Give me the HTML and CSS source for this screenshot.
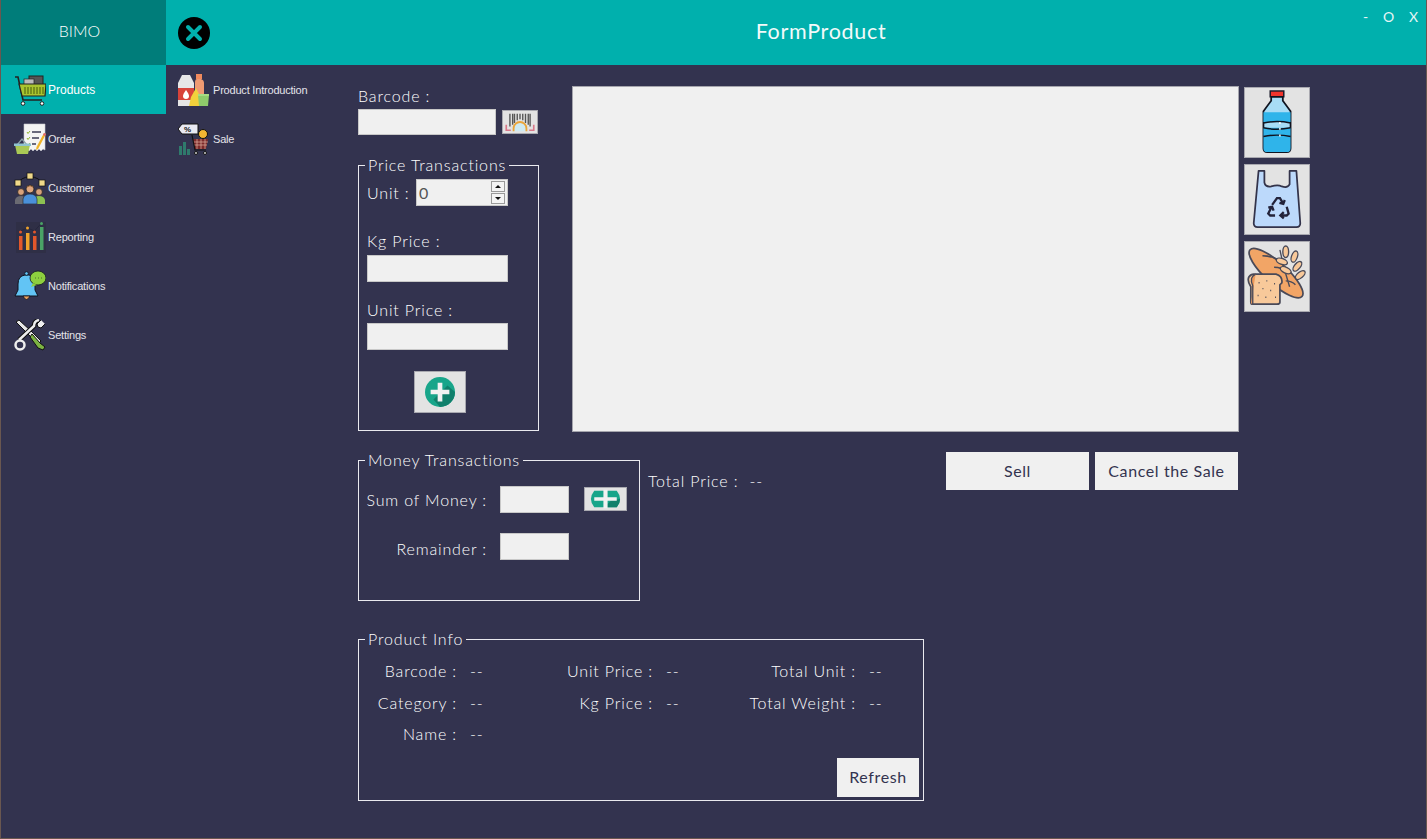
FILE: index.html
```html
<!DOCTYPE html>
<html lang="en">
<head>
  <meta charset="UTF-8" />
  <title>FormProduct</title>
  <link rel="stylesheet" href="styles.css">
</head>
<body>
<div class="app">

  <!-- top bar -->
  <header class="topbar">
    <div class="brand">BIMO</div>
    <div class="titlebar">
      <svg class="close-icon" viewBox="0 0 32 32"><circle cx="16" cy="16" r="16" fill="#000"/><path d="M10 10 22 22M22 10 10 22" stroke="#00b0ad" stroke-width="4" stroke-linecap="round"/></svg>
      <div class="title">FormProduct</div>
      <div class="winbtns"><span>-</span><span>O</span><span>X</span></div>
    </div>
  </header>

  <div class="content">
    <!-- left menu -->
    <nav class="sidebar">
      <a class="navitem active">
        <svg viewBox="0 0 32 32"><path d="M1 3 4 3 9 26H28" fill="none" stroke="#222" stroke-width="1.600"/><rect x="15" y="2" width="14" height="9" fill="#555" stroke="#222"/><rect x="10" y="5" width="10" height="6" fill="#bbb" stroke="#222" stroke-width=".7"/><path d="M5 10H32L31 22H8Z" fill="#a9c42f" stroke="#222" stroke-width="1.200"/><path d="M11 13V20M14 13V20M17 13V20M20 13V20M23 13V20M26 13V20M29 13V20" stroke="#5d7315" stroke-width="1.300"/><circle cx="9" cy="29.500" r="1.800" fill="#fff" stroke="#222"/><circle cx="28" cy="29.500" r="1.800" fill="#fff" stroke="#222"/></svg>
        <span>Products</span>
      </a>
      <a class="navitem">
        <svg viewBox="0 0 32 32"><path d="M10 1H31V27L29 26 27 28 25 26 23 28 21 26 19 28 17 26 15 28 13 26 10 27Z" fill="#f4f4f4" stroke="#c9c9d2" stroke-width=".6"/><path d="M13 9 14 10.500 16 8M13 15 14 16.500 16 14M13 21 14 22.500 16 20" fill="none" stroke="#8eb52d" stroke-width="1"/><path d="M18 9H27M18 15H25M18 21H22" stroke="#3b3b55" stroke-width="1.400"/><path d="M32 11 24 26 22 27 22.500 24 30 10Z" fill="#f0b429"/><path d="M30 10 32 11 31 13 29 12Z" fill="#e0607a"/><path d="M1 22H16L14 31H3Z" fill="#a9c955"/><path d="M3 22 8 16 13 22" fill="none" stroke="#8aa0a8" stroke-width="1.200"/><rect x="0" y="20.500" width="17" height="2.500" fill="#8fc3d0"/></svg>
        <span>Order</span>
      </a>
      <a class="navitem">
        <svg viewBox="0 0 32 32"><path d="M3 13A14 13 0 0 1 29 13" fill="none" stroke="#111" stroke-width="1"/><rect x="1" y="8" width="6" height="6" fill="#f0d98a" stroke="#111" stroke-width=".7"/><rect x="13" y="1" width="6" height="6" fill="#f0d98a" stroke="#111" stroke-width=".7"/><rect x="25" y="8" width="6" height="6" fill="#f0d98a" stroke="#111" stroke-width=".7"/><circle cx="7" cy="20" r="3.400" fill="#d9a27a" stroke="#222" stroke-width=".8"/><path d="M1 32V28Q2 24 7 24 12 24 12 28V32Z" fill="#6a6a72"/><circle cx="25" cy="20" r="3.400" fill="#d9a27a" stroke="#222" stroke-width=".8"/><path d="M20 32V28Q20 24 25 24 30 24 31 28V32Z" fill="#8cc152"/><circle cx="16" cy="17" r="4" fill="#e0a77e" stroke="#222" stroke-width=".8"/><path d="M12 16Q16 11 20 16L16 14Z" fill="#7a4a22"/><path d="M9 32V27Q10 22 16 22 22 22 23 27V32Z" fill="#4a90d9" stroke="#222" stroke-width=".6"/></svg>
        <span>Customer</span>
      </a>
      <a class="navitem">
        <svg viewBox="0 0 32 32"><rect x="2" y="1" width="30" height="31" fill="#2f2f46"/><rect x="5" y="15" width="3.500" height="14" fill="#e2572b"/><rect x="12" y="12" width="3.500" height="17" fill="#f0a32b"/><rect x="19" y="15" width="3.500" height="14" fill="#e2572b"/><rect x="26" y="6" width="3.500" height="23" fill="#4aa366"/><path d="M6.500 10 13.500 7 20.500 10 27.500 2" fill="none" stroke="#23233a" stroke-width=".8"/><circle cx="6.500" cy="11" r="1.500" fill="#e2572b"/><circle cx="13.500" cy="7" r="1.500" fill="#f0a32b"/><circle cx="20.500" cy="11" r="1.500" fill="#e2572b"/><circle cx="27.500" cy="2.500" r="1.500" fill="#4aa366"/></svg>
        <span>Reporting</span>
      </a>
      <a class="navitem">
        <svg viewBox="0 0 32 32"><path d="M11 5Q4 6 4 14V20L1 26H24L21 20V14Q21 6 15 5Z" fill="#62c4f5" stroke="#10131f" stroke-width="1"/><circle cx="12.500" cy="3.500" r="1.800" fill="#62c4f5" stroke="#10131f" stroke-width=".8"/><path d="M9 26Q12.500 33 16 26Z" fill="#e8a05c" stroke="#10131f" stroke-width=".8"/><ellipse cx="24" cy="8" rx="8" ry="7" fill="#8dcf3f" stroke="#10131f" stroke-width=".8"/><path d="M19 13 17 17 23 15Z" fill="#8dcf3f"/><path d="M21 8H21.500M24 8H24.500M27 8H27.500" stroke="#10131f" stroke-width="1.200"/></svg>
        <span>Notifications</span>
      </a>
      <a class="navitem">
        <svg viewBox="0 0 32 32"><path d="M2 3 5 1 17 12 27 22 24 25 14 15Z" fill="#e8e8e8" stroke="#111" stroke-width="1"/><path d="M18 15 26 24 31 28 29 31 24 29 16 18Z" fill="#7cb342" stroke="#111" stroke-width="1"/><path d="M25 1Q20 2 20 7L5 21" fill="none" stroke="#111" stroke-width="4.500"/><path d="M25 1Q20 2 20 7L5 21" fill="none" stroke="#eee" stroke-width="2.500"/><path d="M31 5 27 9 24 8 23 5 27 1" fill="#eee" stroke="#111" stroke-width="1"/><circle cx="6" cy="26" r="4.500" fill="#33334f" stroke="#eee" stroke-width="2.500"/></svg>
        <span>Settings</span>
      </a>
    </nav>

    <!-- sub menu -->
    <nav class="submenu">
      <a class="navitem sub">
        <svg viewBox="0 0 32 32"><path d="M0 9 4 1H12L16 9V32H0Z" fill="#e6e6e6"/><rect x="0" y="14" width="16" height="12" fill="#d8433a"/><path d="M8 16Q11 20 11 22A3 3 0 0 1 5 22Q5 20 8 16Z" fill="#fff"/><rect x="18" y="0" width="6" height="5" fill="#f08a5d"/><path d="M17 9Q17 5 19 5H23Q26 6 26 9V22H17Z" fill="#ef9a72"/><path d="M11 32 13 23 18 14 22 22 22 32Z" fill="#f2d13c"/><path d="M20 21H31L30 32H21Z" fill="#8fcb6b"/><rect x="20" y="20" width="11" height="2" fill="#a6dc84"/></svg>
        <span>Product Introduction</span>
      </a>
      <a class="navitem sub">
        <svg viewBox="0 0 32 32"><path d="M0 6 4 1H20V11H4Z" fill="#e9e9f2" stroke="#111" stroke-width="1"/><text class="pct" x="6" y="9">%</text><circle cx="25" cy="11" r="4.500" fill="#f2b632" stroke="#111" stroke-width="1"/><path d="M15 16H30L28 26H17Z" fill="#7d2b2b"/><path d="M15 19H30M16 22H29M19 16V26M23 16V26M27 16V26" stroke="#e0b0a0" stroke-width=".7"/><path d="M14 12 17 27H28" fill="none" stroke="#111" stroke-width="1.200"/><circle cx="18" cy="30" r="1.500" fill="#ddd" stroke="#111"/><circle cx="27" cy="30" r="1.500" fill="#ddd" stroke="#111"/><path d="M1 32V23H4V32ZM5 32V19H8V32ZM9 32V26H12V32Z" fill="#2f7a6c"/></svg>
        <span>Sale</span>
      </a>
    </nav>

    <main class="main">
      <div class="row-top">
        <div class="col-left">
          <label class="lbl barcode-lbl">Barcode :</label>
          <div class="barcode-row">
            <input class="field barcode-input" type="text">
            <button class="iconbtn barcode-btn">
              <svg viewBox="0 0 36 24"><path d="M7 3V17M10 3V15M12 3V13M15 3V10M18 3V9M21 3V10M24 3V13M27 3V15M29 3V17" stroke="#555" stroke-width="1.500"/><path d="M3 15V21H8M33 15V21H28" fill="none" stroke="#d9788a" stroke-width="1.800"/><path d="M11 22V19A7 7 0 0 1 25 19V22" fill="#cfeaf2" stroke="#eba53a" stroke-width="2"/></svg>
            </button>
          </div>

          <fieldset class="group price-group">
            <legend>Price Transactions</legend>
            <div class="unit-row">
              <label class="lbl">Unit :</label>
              <div class="spinner">
                <span class="spin-val">0</span>
                <span class="spin-btns"><i class="up"></i><i class="down"></i></span>
              </div>
            </div>
            <label class="lbl price-lbl">Kg Price :</label>
            <input class="field price-input" type="text">
            <label class="lbl price-lbl unit-lbl">Unit Price :</label>
            <input class="field price-input" type="text">
            <button class="iconbtn add-btn">
              <svg viewBox="0 0 32 32"><circle cx="16" cy="16" r="16" fill="#18a58a"/><path d="M16 32A16 16 0 0 0 32 16L24 9 9 24Z" fill="#11806c"/><path d="M13.500 6H18.500V13.500H26V18.500H18.500V26H13.500V18.500H6V13.500H13.500Z" fill="#f2f2f2"/></svg>
            </button>
          </fieldset>
        </div>

        <div class="panel"></div>

        <div class="pics">
          <button class="iconbtn pic">
            <svg viewBox="0 0 66 71"><rect x="26" y="3" width="14" height="6" fill="#f0342c" stroke="#1a1a2a" stroke-width="1.500"/><path d="M27 9H39V13L47 24V62Q47 66 43 66H23Q19 66 19 62V24L27 13Z" fill="#a8dcf5" stroke="#10131f" stroke-width="1.800"/><path d="M19 25H47V35H19ZM19 41H47V62Q47 66 43 66H23Q19 66 19 62Z" fill="#2fb4ea"/><path d="M19 36Q33 33 47 36M19 41Q33 44 47 41M19 50Q33 47 47 50" fill="none" stroke="#10131f" stroke-width="1.500"/><path d="M36 35V37M36 41V43M36 48V50" stroke="#fff" stroke-width="1.500"/></svg>
          </button>
          <button class="iconbtn pic">
            <svg viewBox="0 0 66 71"><path d="M14 6H20V18Q21 23 27 22 34 20 38 22 44 24 46 20V6H53L57 60Q57 64 53 64H13Q9 64 9 60Z" fill="#bcd9fb" stroke="#33334a" stroke-width="1.800" stroke-linejoin="round"/><g fill="none" stroke="#23233a" stroke-width="2.400"><path d="M28 41 33 34H36L39 39M41 36 39.500 40 35.500 39"/><path d="M27 44 24 50 26 52H31M24 44 28 43 29.500 47"/><path d="M43 43 45 50 43 52H37M40 48.500 36.500 52 40 55"/></g></svg>
          </button>
          <button class="iconbtn pic">
            <svg viewBox="0 0 66 71"><g fill="#f2a566" stroke="#4a4a58" stroke-width="1.800"><ellipse cx="32" cy="32" rx="36" ry="11" transform="rotate(42 32 32)"/></g><path d="M18 14Q26 14 34 18M30 26Q38 26 44 31M42 40Q48 40 52 44" fill="none" stroke="#4a4a58" stroke-width="1.500"/><g fill="#f8c99a" stroke="#4a4a58" stroke-width="1.400"><path d="M46 46 40 26 36 8"/><ellipse cx="42" cy="10" rx="3" ry="6"/><ellipse cx="38" cy="20" rx="6" ry="3" transform="rotate(20 38 20)"/><ellipse cx="51" cy="15" rx="3" ry="6" transform="rotate(20 51 15)"/><ellipse cx="54" cy="25" rx="3" ry="6" transform="rotate(40 54 25)"/><ellipse cx="42" cy="29" rx="6" ry="3" transform="rotate(25 42 29)"/><ellipse cx="57" cy="34" rx="3" ry="6" transform="rotate(50 57 34)"/></g><path d="M9 33H32Q39 35 38 42L36 44V62Q36 64 33 64H8Q6 64 6 62V46Q2 40 4 36 6 33 9 33Z" fill="#f8c99a" stroke="#4a4a58" stroke-width="1.800"/><path d="M11 33Q4 36 8 45V64H6" fill="#ee9a5a" stroke="#4a4a58" stroke-width="1.400"/><path d="M14 42H15M22 40H23M30 43H31M18 48H19M26 50H27M13 55H14M21 57H22M31 57H32" stroke="#4a4a58" stroke-width="1.500"/></svg>
          </button>
        </div>
      </div>

      <div class="row-mid">
        <fieldset class="group money-group">
          <legend>Money Transactions</legend>
          <div class="money-row">
            <label class="lbl money-lbl">Sum of Money :</label>
            <input class="field money-input" type="text">
            <button class="iconbtn money-add">
              <svg viewBox="0 0 43 24"><path d="M8 2H35Q39 7 39 12 39 17 35 22H8Q4 17 4 12 4 7 8 2Z" fill="#18a58a"/><path d="M39 12Q39 17 35 22H20L28 14Z" fill="#11806c"/><path d="M19 1H24V10H35V14H24V23H19V14H8V10H19Z" fill="#f2f2f2"/></svg>
            </button>
          </div>
          <div class="money-row remainder-row">
            <label class="lbl money-lbl">Remainder :</label>
            <input class="field money-input" type="text">
          </div>
        </fieldset>

        <div class="total"><span>Total Price :</span><span>--</span></div>

        <div class="actions">
          <button class="btn sell-btn">Sell</button>
          <button class="btn cancel-btn">Cancel the Sale</button>
        </div>
      </div>

      <fieldset class="group info-group">
        <legend>Product Info</legend>
        <div class="info-grid">
          <span class="k">Barcode :</span><span class="v">--</span>
          <span class="k">Unit Price :</span><span class="v">--</span>
          <span class="k">Total Unit :</span><span class="v">--</span>
          <span class="k">Category :</span><span class="v">--</span>
          <span class="k">Kg Price :</span><span class="v">--</span>
          <span class="k">Total Weight :</span><span class="v">--</span>
          <span class="k">Name :</span><span class="v">--</span>
        </div>
        <button class="btn refresh-btn">Refresh</button>
      </fieldset>
    </main>
  </div>
</div>
</body>
</html>
```

FILE: styles.css
```css
* { margin:0; padding:0; box-sizing:border-box; }
html, body {
  width:100%; height:100%;
  overflow:hidden;
  background:#33334f;
}
body {
  font-family:"Lato", "Open Sans", sans-serif;
  font-size:16px;
  font-weight:300;
  letter-spacing:.85px;
  color:#fff;
}

.app {
  width:1427px; height:839px;
  display:flex; flex-direction:column;
  border:solid #6a5750;
  border-width:0 1px 1px 1px;
}

/* === top bar === */
.topbar { display:flex; height:65px; flex:none; }
.brand {
  width:165px;
  background:#007d7a;
  color:#fff;
  display:flex; align-items:center; justify-content:center;
  padding:0 8px 4px 0;
  letter-spacing:0;
}
.titlebar {
  flex:1;
  background:#00b0ad;
  display:flex; align-items:center;
  position:relative;
  padding-left:12px;
}
.close-icon { width:32px; height:32px; }
.title {
  flex:1;
  text-align:center;
  font-size:21.5px;
  letter-spacing:.7px;
  font-weight:400;
  color:#f2fafa;
  padding-left:6px;
  padding-bottom:4px;
}
.winbtns {
  position:absolute; top:8px; right:7px;
  display:flex; gap:14px;
  font-size:14px;
  font-weight:400;
  color:#e6f6f6;
}

/* === menus === */
.content { flex:1; display:flex; min-height:0; }
.sidebar { width:165px; flex:none; }
.submenu { width:192px; flex:none; }
.navitem {
  height:49px;
  display:flex; align-items:center;
  padding-left:13px;
  font-family:"Liberation Sans", sans-serif;
  font-size:11px;
  font-weight:400;
  letter-spacing:-.2px;
  color:#e4e4ea;
}
.navitem svg { width:32px; height:32px; flex:none; margin-right:2px; }
.navitem.active { background:#00b0ad; color:#fff; font-size:12px; letter-spacing:0; }
.navitem.sub { padding-left:12px; }
.navitem.sub svg { margin-right:3px; }
.pct { font-size:8px; font-weight:700; fill:#111; font-family:"Liberation Sans", sans-serif; }

/* === main area === */
.main { flex:1; padding-top:21px; min-width:0; }
.row-top { display:flex; height:346px; }
.col-left { width:181px; margin-right:33px; }
.lbl { display:block; line-height:20px; white-space:nowrap; }
.barcode-lbl { margin-bottom:3px; }
.barcode-row { display:flex; align-items:center; gap:6px; }

.field {
  display:block;
  background:#f0f0f0;
  border:1px solid #c8c8c8;
  outline:none;
}
.barcode-input { width:138px; height:26px; }
.iconbtn {
  display:block;
  background:#e3e3e3;
  border:1px solid #a9a9b0;
}
.iconbtn svg { display:block; width:100%; height:100%; }
.barcode-btn { width:36px; height:24px; }

.group {
  border:1px solid #eaeaef;
  min-width:0;
}
.group legend {
  margin-left:6px;
  padding:0 3px;
  line-height:20px;
}
.price-group {
  height:276px;
  margin-top:20px;
  padding:0 8px;
}
.price-group legend { margin-left:-2px; }
.unit-row { display:flex; align-items:center; gap:8px; margin-top:4px; }
.unit-row .lbl { width:41px; }
.spinner {
  width:92px; height:27px;
  background:#f0f0f0;
  border:1px solid #c8c8c8;
  display:flex; align-items:center; justify-content:space-between;
  color:#555;
  padding-left:2px;
  font-weight:400;
}
.spin-btns { display:flex; flex-direction:column; gap:1px; padding-right:2px; }
.spin-btns i {
  width:14px; height:11px;
  background:#f4f4f4;
  border:1px solid #9a9a9a;
  display:flex; align-items:center; justify-content:center;
}
.spin-btns i::after {
  content:"";
  border:3px solid transparent;
}
.spin-btns .up::after { border-bottom:3px solid #111; margin-top:-3px; }
.spin-btns .down::after { border-top:3px solid #111; margin-top:3px; }
.price-lbl { margin-top:25px; margin-bottom:4px; }
.unit-lbl { margin-top:18px; margin-bottom:3px; }
.price-input { width:141px; height:27px; }
.add-btn { width:52px; height:42px; margin:21px 0 0 47px; padding:5px 10px; }

.panel {
  width:667px; height:346px;
  background:#f0f0f0;
  border:1px solid #a5a5ad;
}
.pics { display:flex; flex-direction:column; gap:6px; margin-left:5px; padding-top:1px; }
.pic { width:66px; height:71px; }

/* === middle row === */
.row-mid { display:flex; margin-top:18px; }
.money-group { width:282px; height:151px; padding:0; }
.money-row { display:flex; align-items:center; height:27px; margin-top:16px; }
.remainder-row { margin-top:20px; }
.remainder-row .money-lbl { padding-top:5px; }
.money-lbl { width:128px; text-align:right; margin-right:13px; }
.money-input { width:69px; height:27px; }
.money-add { width:43px; height:24px; margin:-1px 0 0 15px; padding:1px 0; }
.total {
  display:flex; gap:11px;
  margin:21px 0 0 8px;
  width:298px;
  line-height:20px;
}
.actions { display:flex; gap:6px; margin-top:2px; }
.btn {
  font:inherit;
  font-weight:400;
  letter-spacing:.6px;
  color:#33334f;
  background:#f0f0f0;
  border:none;
  padding-bottom:2px;
}
.sell-btn { width:143px; height:38px; }
.cancel-btn { width:143px; height:38px; }

/* === product info === */
.info-group {
  width:566px; height:172px;
  margin-top:28px;
  padding:0;
  position:relative;
}
.info-grid {
  display:grid;
  grid-template-columns:98px 98px 98px 87px 116px 1fr;
  grid-auto-rows:31.5px;
  margin-top:6px;
  line-height:31.5px;
}
.k { text-align:right; white-space:nowrap; }
.v { padding-left:13px; }
.refresh-btn {
  position:absolute; right:4px; bottom:3px;
  width:82px; height:39px;
}
```
